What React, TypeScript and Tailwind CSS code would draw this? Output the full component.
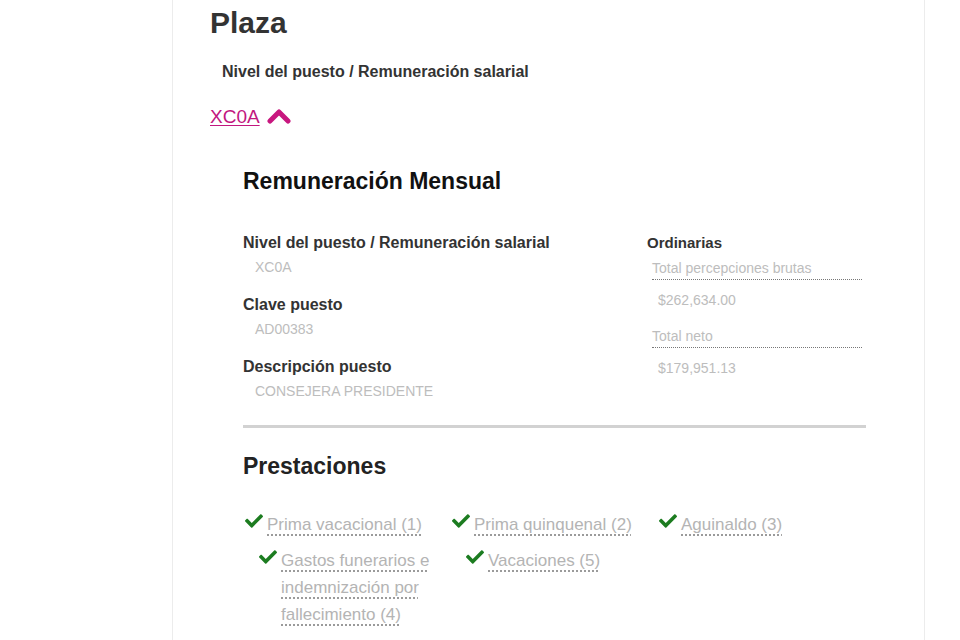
import { FaCheck } from "react-icons/fa";

const left = [
  { label: "Nivel del puesto / Remuneración salarial", value: "XC0A" },
  { label: "Clave puesto", value: "AD00383" },
  { label: "Descripción puesto", value: "CONSEJERA PRESIDENTE" },
];

const right = [
  { label: "Total percepciones brutas", value: "$262,634.00" },
  { label: "Total neto", value: "$179,951.13" },
];

const rows = [
  ["Prima vacacional (1)", "Prima quinquenal (2)", "Aguinaldo (3)"],
  ["Gastos funerarios e indemnización por fallecimiento (4)", "Vacaciones (5)"],
];

function Benefit({ text }: { text: string }) {
  return (
    <li className="flex w-[207px] items-start">
      <FaCheck className="mt-[1px] mr-1 h-[18px] w-[18px] shrink-0 text-[#1c7c20]" />
      <span className="flex-1 text-[17px] leading-[27px] text-[#b4b4b4] underline decoration-dotted decoration-[#8a8a8a] underline-offset-[5px]">
        {text}
      </span>
    </li>
  );
}

export default function App() {
  return (
    <div className="min-h-screen bg-white font-['Liberation_Sans',Arial,sans-serif]">
      <div className="ml-[172px] min-h-screen w-[753px] border-x border-[#ececec] pl-[37px]">
        <h1 className="pt-[6px] text-[30px] font-bold leading-[34px] text-[#333]">Plaza</h1>
        <p className="mt-[22px] pl-[12px] text-[16px] font-bold leading-[20px] text-[#333]">
          Nivel del puesto / Remuneración salarial
        </p>
        <div className="mt-[23px] flex items-center gap-[7px]">
          <a className="text-[19px] leading-[24px] text-[#c2177f] underline underline-offset-2">XC0A</a>
          <svg width="24" height="18" viewBox="0 0 24 18" className="-mt-[2px]">
            <polyline
              points="3,14 12,5 21,14"
              fill="none"
              stroke="#c8177f"
              strokeWidth="5"
              strokeLinejoin="round"
              strokeLinecap="round"
            />
          </svg>
        </div>

        <section className="ml-[33px] w-[623px]">
          <h2 className="mt-[38px] text-[23px] font-bold leading-[28px] text-[#111]">
            Remuneración Mensual
          </h2>

          <div className="mt-[38px] flex">
            <div className="w-[404px]">
              {left.map((f) => (
                <div key={f.label} className="mb-[18px]">
                  <p className="text-[16px] font-bold leading-[20px] text-[#333]">{f.label}</p>
                  <p className="mt-[4px] pl-[12px] text-[14px] leading-[20px] text-[#bdbdbd]">{f.value}</p>
                </div>
              ))}
            </div>
            <div className="w-[215px]">
              <p className="text-[15px] font-bold leading-[20px] text-[#333]">Ordinarias</p>
              {right.map((f, i) => (
                <div key={f.label} className={i === 0 ? "mt-[5px]" : "mt-[16px]"}>
                  <p className="ml-[5px] border-b border-dotted border-[#777] pb-[1px] text-[14px] leading-[20px] text-[#bdbdbd]">
                    {f.label}
                  </p>
                  <p className="mt-[10px] pl-[11px] text-[14px] leading-[20px] text-[#bdbdbd]">{f.value}</p>
                </div>
              ))}
            </div>
          </div>

          <hr className="mt-[6px] h-[3px] border-0 bg-[#d2d2d2]" />

          <h2 className="mt-[24px] text-[23px] font-bold leading-[28px] text-[#222]">Prestaciones</h2>

          <ul className="mt-[31px] flex pl-[2px]">
            {rows[0].map((t) => (
              <Benefit key={t} text={t} />
            ))}
          </ul>
          <ul className="mt-[9px] flex pl-[16px]">
            {rows[1].map((t) => (
              <Benefit key={t} text={t} />
            ))}
          </ul>
        </section>
      </div>
    </div>
  );
}
